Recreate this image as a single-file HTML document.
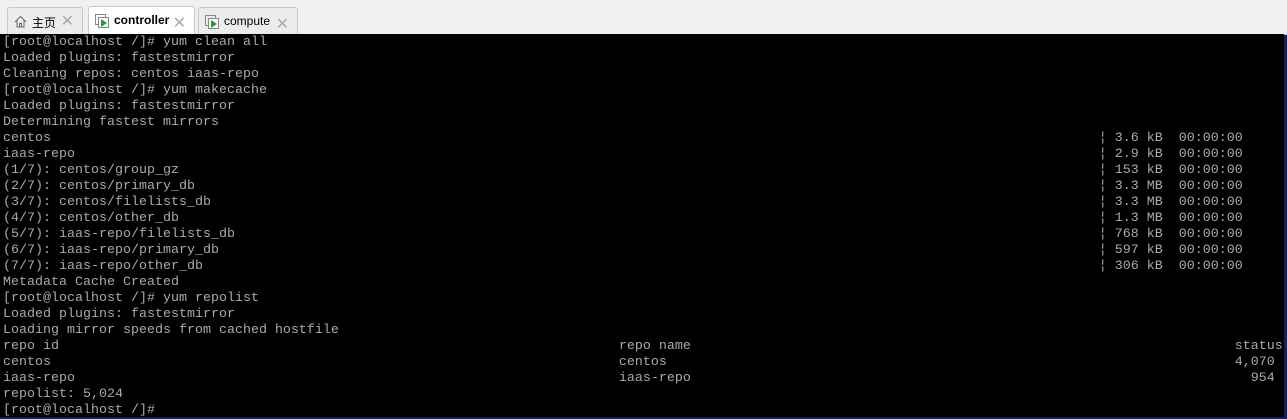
<!DOCTYPE html><html><head><style>
body{margin:0;width:1287px;height:417px;overflow:hidden;background:#1a1f5a;}
.tabs{position:absolute;left:0;top:0;width:1287px;height:34px;background:#f0f0f0;border-bottom:1px solid #ccc;}
.tab{position:absolute;top:7px;height:27px;border:1px solid #c8c8c8;border-bottom:none;border-radius:3px 3px 0 0;background:#ececec;font:12px "Liberation Sans","Noto Sans CJK SC",sans-serif;color:#000;box-sizing:border-box;}
.tab.act{background:#fff;font-weight:bold;top:6px;height:28px}
.tab span{position:absolute;top:6px}
.x{position:absolute;right:8px;top:4px;color:#aaa;font-size:16px;font-weight:normal}
.term{position:absolute;left:0;top:34px;width:1284px;height:383px;background:#000;}
pre{margin:0;padding:1px 0 0 3px;font:13.33px/16px "Liberation Mono",monospace;color:#aaaaaa;letter-spacing:0}
</style></head><body>
<div class="tabs">
<div class="tab" style="left:7px;width:76px"><svg style="position:absolute;left:6px;top:7px" width="13" height="13" viewBox="0 0 13 13"><path d="M1 7L6.5 1.5 12 7M3 5.5V12h7V5.5M5.5 12V8.5h2V12" fill="none" stroke="#666"/></svg><span style="left:24px">主页</span><span class="x" style="top:3px">✕</span></div>
<div class="tab act" style="left:88px;width:107px"><svg style="position:absolute;left:6px;top:7px" width="15" height="14" viewBox="0 0 15 14"><rect x="0.5" y="0.5" width="10" height="10" fill="none" stroke="#888"/><rect x="3.5" y="3.5" width="10" height="10" fill="#fff" stroke="#888"/><path d="M6 5l6 4-6 4z" fill="#2a9a2a"/></svg><span style="left:25px">controller</span><span class="x">✕</span></div>
<div class="tab" style="left:198px;width:100px"><svg style="position:absolute;left:6px;top:7px" width="15" height="14" viewBox="0 0 15 14"><rect x="0.5" y="0.5" width="10" height="10" fill="none" stroke="#888"/><rect x="3.5" y="3.5" width="10" height="10" fill="#fff" stroke="#888"/><path d="M6 5l6 4-6 4z" fill="#2a9a2a"/></svg><span style="left:25px">compute</span><span class="x">✕</span></div>
</div>
<div class="term"><pre>[root@localhost /]# yum clean all
Loaded plugins: fastestmirror
Cleaning repos: centos iaas-repo
[root@localhost /]# yum makecache
Loaded plugins: fastestmirror
Determining fastest mirrors
centos                                                                                                                                   ¦ 3.6 kB  00:00:00
iaas-repo                                                                                                                                ¦ 2.9 kB  00:00:00
(1/7): centos/group_gz                                                                                                                   ¦ 153 kB  00:00:00
(2/7): centos/primary_db                                                                                                                 ¦ 3.3 MB  00:00:00
(3/7): centos/filelists_db                                                                                                               ¦ 3.3 MB  00:00:00
(4/7): centos/other_db                                                                                                                   ¦ 1.3 MB  00:00:00
(5/7): iaas-repo/filelists_db                                                                                                            ¦ 768 kB  00:00:00
(6/7): iaas-repo/primary_db                                                                                                              ¦ 597 kB  00:00:00
(7/7): iaas-repo/other_db                                                                                                                ¦ 306 kB  00:00:00
Metadata Cache Created
[root@localhost /]# yum repolist
Loaded plugins: fastestmirror
Loading mirror speeds from cached hostfile
repo id                                                                      repo name                                                                    status
centos                                                                       centos                                                                       4,070
iaas-repo                                                                    iaas-repo                                                                      954
repolist: 5,024
[root@localhost /]#</pre></div>
</body></html>
